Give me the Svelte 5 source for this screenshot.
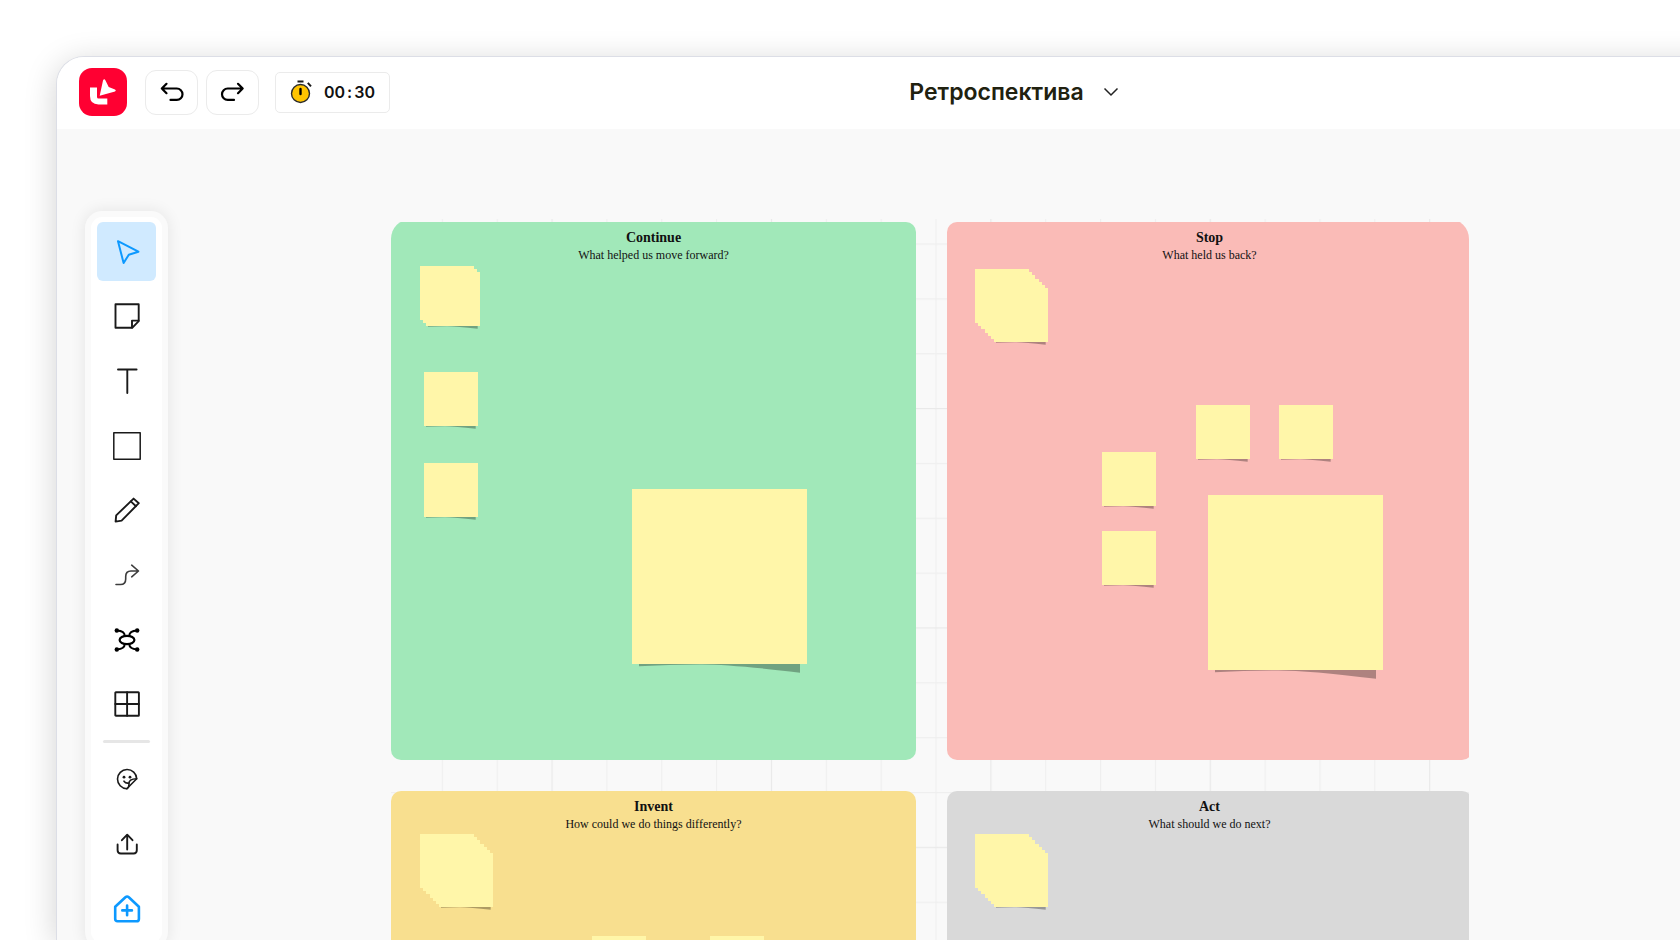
<script lang="ts">
	type Note = { x: number; y: number; size?: 'sm' | 'lg'; stack?: number };
	type Card = { title: string; hint: string; tone: string; notes: Note[] };

	const cards: Card[] = [
		{
			title: 'Continue',
			hint: 'What helped us move forward?',
			tone: 'green',
			notes: [
				{ x: 29, y: 44, stack: 3 },
				{ x: 33, y: 150 },
				{ x: 33, y: 241 },
				{ x: 241, y: 267, size: 'lg' }
			]
		},
		{
			title: 'Stop',
			hint: 'What held us back?',
			tone: 'pink',
			notes: [
				{ x: 28, y: 47, stack: 7 },
				{ x: 249, y: 183 },
				{ x: 332, y: 183 },
				{ x: 155, y: 230 },
				{ x: 155, y: 309 },
				{ x: 261, y: 273, size: 'lg' }
			]
		},
		{
			title: 'Invent',
			hint: 'How could we do things differently?',
			tone: 'yellow',
			notes: [
				{ x: 29, y: 43, stack: 7 },
				{ x: 201, y: 145 },
				{ x: 319, y: 145 }
			]
		},
		{
			title: 'Act',
			hint: 'What should we do next?',
			tone: 'grey',
			notes: [{ x: 28, y: 43, stack: 7 }]
		}
	];

	const tools = [
		{ id: 'select', label: 'Выбор' },
		{ id: 'note', label: 'Стикер' },
		{ id: 'text', label: 'Текст' },
		{ id: 'shape', label: 'Фигура' },
		{ id: 'pencil', label: 'Карандаш' },
		{ id: 'line', label: 'Линия' },
		{ id: 'mindmap', label: 'Интеллект-карта' },
		{ id: 'table', label: 'Таблица' }
	];

	const extras = [
		{ id: 'emoji', label: 'Наклейки' },
		{ id: 'upload', label: 'Загрузить' },
		{ id: 'apps', label: 'Добавить' }
	];

	let active = $state('select');

	// a stack is several equal notes, each shifted down and to the right
	function spread(note: Note) {
		return Array.from({ length: note.stack ?? 1 }, (_, i) => Math.round((i * 19) / 6));
	}
</script>

{#snippet icon(id: string)}
	<svg class="icon" viewBox="0 0 28 28" aria-hidden="true">
		{#if id === 'select'}
			<path stroke-width="2" d="M5 3.2 25.4 13.7 15.8 16.7 10.6 25Z" />
		{:else if id === 'note'}
			<path d="M2.5 2.3h23.2v16.9l-6.5 6.6H2.5Z" />
			<path d="M19 25.6v-7h6.6" />
		{:else if id === 'text'}
			<path d="M5 2.5h18.6M14.3 2.5V26" />
		{:else if id === 'shape'}
			<path stroke-width="1.5" d="M.8.8h26.4v26.4H.8Z" />
		{:else if id === 'pencil'}
			<path d="M2.6 25.6 3.2 19.4 20.6 2.6 25.8 7.2 8.6 24.6Z" />
			<path d="M17.8 5.4l5.2 4.8" />
		{:else if id === 'line'}
			<path
				stroke="#3d3d3d"
				stroke-width="1.6"
				d="M3 23.5h4.5c4 0 5.2-2 5.2-5.5v-2.5c0-4 1.5-5.5 5.3-5.5h7.2M18.7 4.2 25.5 10l-6.8 5.8" />
		{:else if id === 'mindmap'}
			<ellipse stroke="#000" stroke-width="2.2" cx="14" cy="14" rx="7.4" ry="4.2" />
			<path
				stroke="#000"
				stroke-width="2"
				d="M4 4.6c4.5.2 7.6 1.6 7.8 5.4M24 4.6c-4.5.2-7.6 1.6-7.8 5.4M4 23.4c4.5-.2 7.6-1.6 7.8-5.4M24 23.4c-4.5-.2-7.6-1.6-7.8-5.4" />
			<g fill="#000" stroke="none">
				<circle cx="3.8" cy="4.5" r="2.2" />
				<circle cx="24.2" cy="4.5" r="2.2" />
				<circle cx="3.8" cy="23.5" r="2.2" />
				<circle cx="24.2" cy="23.5" r="2.2" />
			</g>
		{:else if id === 'table'}
			<rect x="2.3" y="2.2" width="23.6" height="23.6" rx=".6" />
			<path d="M14.1 2.2v23.6M2.3 14h23.6" />
		{:else if id === 'emoji'}
			<path stroke-width="1.6" d="M23.7 13.7A9.6 9.6 0 1 0 13.8 23.7Z" />
			<path stroke-width="1.6" d="M23.7 13.7c-5.7 0-8 2.2-7.7 5.4.1 1.8-.5 3.6-2.2 4.6M11 16.2c1.2 1.6 3 2.2 5 1.7" />
			<circle fill="#1a1a1a" stroke="none" cx="11" cy="12.2" r="1.4" />
			<circle fill="#1a1a1a" stroke="none" cx="17" cy="12.2" r="1.4" />
		{:else if id === 'upload'}
			<path d="M14.2 19.5V5M8.9 10.2 14.2 4.7l5.3 5.5M4.6 14.5v5.8c0 2.2 1 3.2 3.2 3.2h12.8c2.2 0 3.2-1 3.2-3.2v-5.8" />
		{:else if id === 'apps'}
			<path
				stroke="#0d99ff"
				stroke-width="2.6"
				d="M2.2 11.8 12.4 2.2q1.7-1.4 3.4 0L25.9 11.8v12.1q0 2.3-2.3 2.3H4.5q-2.3 0-2.3-2.3Z" />
			<path stroke="#0d99ff" stroke-width="2.6" d="M14.1 10.6v9.6M9.3 15.4h9.6" />
		{/if}
	</svg>
{/snippet}

{#snippet toolButton(tool: { id: string; label: string })}
	<button
		type="button"
		class="tool"
		class:tool-active={active === tool.id}
		aria-label={tool.label}
		aria-pressed={active === tool.id}
		onclick={() => (active = tool.id)}>
		{@render icon(tool.id)}
	</button>
{/snippet}

<div class="page">
	<div class="window">
		<header class="topbar">
			<a class="logo" href="#home" aria-label="На главную">
				<svg viewBox="0 0 48 48" aria-hidden="true">
					<path d="M11 19.5h7v9.5q0 1.5 1.5 1.5h8.8v5.9H19.5Q11 36.4 11 28Z" />
					<path d="M24 12.4q1.2-2.2 2.5 0l3.2 6.6 6.3 2.5q1.7 1 0 2L20.7 27.7Z" />
				</svg>
			</a>
			<div class="history">
				<button type="button" class="step" aria-label="Отменить">
					<svg class="icon" viewBox="0 0 28 28" aria-hidden="true">
						<path stroke="#000" stroke-width="2.2" d="M3.8 10.5h15a5.7 5.7 0 0 1 0 11.4h-6.3M8.5 5.8l-4.7 4.7 4.7 4.7" />
					</svg>
				</button>
				<button type="button" class="step" aria-label="Повторить">
					<svg class="icon" viewBox="0 0 28 28" aria-hidden="true">
						<path stroke="#000" stroke-width="2.2" d="M23.7 10.5h-15a5.7 5.7 0 0 0 0 11.4h6.3M19 5.8l4.7 4.7-4.7 4.7" />
					</svg>
				</button>
			</div>
			<button type="button" class="timer">
				<svg viewBox="0 0 22 26" aria-hidden="true">
					<circle cx="10.5" cy="14.5" r="9" fill="#ffc400" stroke="#2b2b2b" stroke-width="1.4" />
					<path d="M7.5 2.5h6M17.8 3.8l3.2 3.6" stroke="#1a1a1a" stroke-width="2" />
					<path d="M10.5 10v5" stroke="#000" stroke-width="2.4" stroke-linecap="round" />
				</svg>
				<span class="time">00<span class="colon">:</span>30</span>
			</button>
			<div class="heading">
				<button type="button" class="board-name">
					Ретроспектива
					<svg viewBox="0 0 16 10" aria-hidden="true">
						<path d="M1.5 1.5 8 8l6.5-6.5" />
					</svg>
				</button>
			</div>
		</header>

		<main class="stage">
			<nav class="rail" aria-label="Инструменты">
				<div class="rail-inner">
					<div class="tools tools-main">
						{#each tools as tool (tool.id)}
							{@render toolButton(tool)}
						{/each}
					</div>
					<hr />
					<div class="tools">
						{#each extras as tool (tool.id)}
							{@render toolButton(tool)}
						{/each}
					</div>
				</div>
			</nav>

			<section class="board">
				<svg class="mesh" aria-hidden="true">
					<defs>
						<pattern id="mesh" x="160.5" y="189" width="219.4" height="219.4" patternUnits="userSpaceOnUse">
							<path
								d="M55.4 0v220M110.3 0v220M165.1 0v220M0 55.4h220M0 110.3h220M0 165.1h220"
								stroke="#efefef"
								stroke-width="1.2" />
							<path d="M.6 0v220M0 .6h220" stroke="#e9e9e9" stroke-width="1.2" />
						</pattern>
					</defs>
					<rect width="100%" height="100%" fill="url(#mesh)" />
				</svg>
				<div class="cards">
					{#each cards as card (card.title)}
						<article class="card {card.tone}">
							<h2>{card.title}</h2>
							<p>{card.hint}</p>
							{#each card.notes as note}
								{#each spread(note) as shift, i}
									<div
										class="note note-{note.size ?? 'sm'}"
										style={`left: ${note.x + shift}px; top: ${note.y + shift}px`}>
										{#if i === spread(note).length - 1}
											<svg class="curl" viewBox="0 0 160 10" preserveAspectRatio="none" aria-hidden="true">
												<path d="M0 0H160V10Q90 0 60 .5 30 .5 0 2.5Z" />
											</svg>
										{/if}
									</div>
								{/each}
							{/each}
						</article>
					{/each}
				</div>
			</section>
		</main>
	</div>
</div>

<style>
	:global(body) {
		background: #fff;
		overflow: hidden;
	}

	.page {
		box-sizing: border-box;
		display: flex;
		height: 100vh;
		padding: 56px 0 0 56px;
		overflow: hidden;
		font-family: Inter, 'Liberation Sans', sans-serif;
		color: #1a1a1a;
	}

	button {
		padding: 0;
		border: none;
		background: none;
		font: inherit;
		color: inherit;
		cursor: pointer;
	}

	/* the window runs off the right edge of the page */
	.window {
		flex: 1;
		display: flex;
		flex-direction: column;
		min-width: 0;
		margin-right: -60px;
		border: 1px solid #dcdee6;
		border-width: 1px 0 0 1px;
		border-radius: 28px 0 0 0;
		background: #f9f9f9;
		box-shadow: 0 6px 32px rgba(0, 0, 0, 0.18);
	}

	.topbar {
		box-sizing: border-box;
		display: flex;
		align-items: center;
		height: 72px;
		padding: 0 102px 2px 22px;
		border-radius: 27px 0 0 0;
		background: #fff;
	}

	.logo {
		width: 48px;
		height: 48px;
		border-radius: 13px;
		background: #ff0032;
	}

	.logo svg {
		display: block;
		fill: #fff;
	}

	.history {
		display: flex;
		gap: 8px;
		margin-left: 18px;
	}

	.step,
	.timer {
		display: flex;
		align-items: center;
		justify-content: center;
		box-sizing: border-box;
		border: 1px solid #ebebeb;
		background: #fff;
	}

	.step {
		width: 53px;
		height: 45px;
		border-radius: 11px;
	}

	.timer {
		gap: 12px;
		height: 41px;
		margin-left: 16px;
		padding: 0 14px;
		border-radius: 5px;
	}

	.timer svg {
		width: 22px;
		height: 26px;
		fill: none;
	}

	.time {
		font-size: 16px;
		font-weight: 600;
		color: #111;
	}

	.colon {
		padding: 0 2px;
	}

	.heading {
		flex: 1;
		display: flex;
		justify-content: center;
	}

	.board-name {
		display: flex;
		align-items: center;
		gap: 19px;
		font-size: 23px;
		line-height: 32px;
		font-weight: 600;
		color: #21210f;
	}

	.board-name svg {
		width: 16px;
		height: 10px;
		fill: none;
		stroke: #222;
		stroke-width: 1.5;
	}

	.stage {
		flex: 1;
		display: flex;
		align-items: flex-start;
		min-height: 0;
	}

	.rail {
		margin: 82px 0 0 28px;
		padding: 6px;
		border-radius: 17px;
		background: #fafafa;
		box-shadow: 0 0 16px rgba(0, 0, 0, 0.09);
	}

	.rail-inner {
		padding: 5px 6px;
		border-radius: 11px;
		background: #fff;
	}

	.tools {
		display: flex;
		flex-direction: column;
		gap: 6px;
	}

	.tools-main {
		justify-content: space-between;
		gap: 0;
		aspect-ratio: 59 / 512;
	}

	.tool {
		display: flex;
		align-items: center;
		justify-content: center;
		width: 59px;
		height: 59px;
		border-radius: 6px;
	}

	.tool-active {
		background: #d0eaff;
	}

	.icon {
		width: 28px;
		height: 28px;
		fill: none;
		stroke: #1a1a1a;
		stroke-width: 1.9;
		stroke-linecap: round;
		stroke-linejoin: round;
	}

	.tool-active .icon {
		stroke: #0d99ff;
	}

	hr {
		height: 3px;
		margin: 6px;
		border: none;
		border-radius: 2px;
		background: #e6e6e6;
	}

	.board {
		position: relative;
		flex: 1;
		margin: 90px 271px 0 223px;
		padding-top: 3px;
		border-radius: 20px 20px 0 0;
		overflow: hidden;
	}

	.mesh {
		position: absolute;
		inset: 0;
		width: 100%;
		height: 100%;
	}

	.cards {
		position: relative;
		display: grid;
		grid-template-columns: 1fr 1fr;
		gap: 31px;
		margin-right: -3px;
	}

	.card {
		position: relative;
		box-sizing: border-box;
		min-height: 538px;
		padding-top: 7px;
		border-radius: 10px;
		font-family: 'Liberation Serif', serif;
		text-align: center;
		color: #111;
	}

	.green {
		background: #a1e8b9;
	}

	.pink {
		background: #fabbb7;
	}

	.yellow {
		background: #f8df8f;
	}

	.grey {
		background: #d9d9d9;
	}

	h2 {
		margin: 0;
		font-size: 14px;
		line-height: 18px;
		font-weight: 700;
	}

	p {
		margin: 0;
		font-size: 12px;
		line-height: 16px;
	}

	.note {
		position: absolute;
		background: #fff6a9;
	}

	.note-sm {
		width: 54px;
		height: 54px;
	}

	.note-lg {
		width: 175px;
		height: 175px;
	}

	.curl {
		position: absolute;
		top: 100%;
		left: 4%;
		width: 92%;
		height: 5%;
		fill: rgba(0, 0, 0, 0.3);
	}
</style>
